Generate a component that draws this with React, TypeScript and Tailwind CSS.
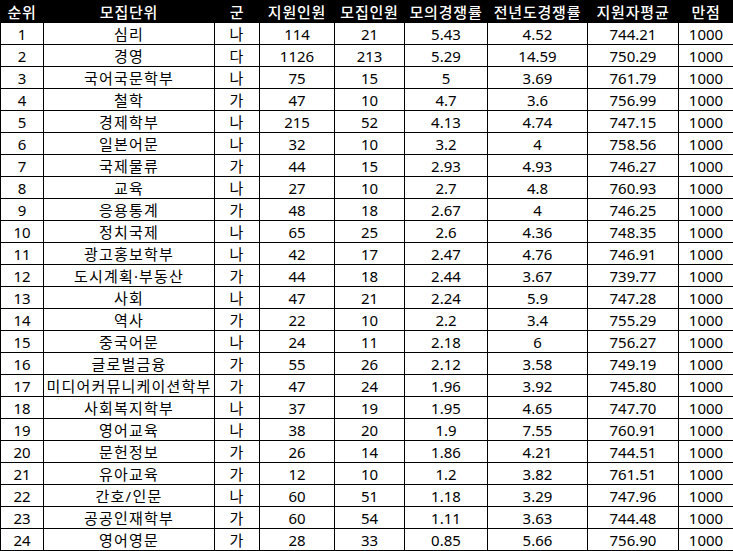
import React from "react";

const rows: (string | number)[][] = [
  [1, "심리", "나", 114, 21, "5.43", "4.52", "744.21", 1000],
  [2, "경영", "다", 1126, 213, "5.29", "14.59", "750.29", 1000],
  [3, "국어국문학부", "나", 75, 15, "5", "3.69", "761.79", 1000],
  [4, "철학", "가", 47, 10, "4.7", "3.6", "756.99", 1000],
  [5, "경제학부", "나", 215, 52, "4.13", "4.74", "747.15", 1000],
  [6, "일본어문", "나", 32, 10, "3.2", "4", "758.56", 1000],
  [7, "국제물류", "가", 44, 15, "2.93", "4.93", "746.27", 1000],
  [8, "교육", "나", 27, 10, "2.7", "4.8", "760.93", 1000],
  [9, "응용통계", "가", 48, 18, "2.67", "4", "746.25", 1000],
  [10, "정치국제", "나", 65, 25, "2.6", "4.36", "748.35", 1000],
  [11, "광고홍보학부", "나", 42, 17, "2.47", "4.76", "746.91", 1000],
  [12, "도시계획·부동산", "가", 44, 18, "2.44", "3.67", "739.77", 1000],
  [13, "사회", "나", 47, 21, "2.24", "5.9", "747.28", 1000],
  [14, "역사", "가", 22, 10, "2.2", "3.4", "755.29", 1000],
  [15, "중국어문", "나", 24, 11, "2.18", "6", "756.27", 1000],
  [16, "글로벌금융", "가", 55, 26, "2.12", "3.58", "749.19", 1000],
  [17, "미디어커뮤니케이션학부", "가", 47, 24, "1.96", "3.92", "745.80", 1000],
  [18, "사회복지학부", "나", 37, 19, "1.95", "4.65", "747.70", 1000],
  [19, "영어교육", "나", 38, 20, "1.9", "7.55", "760.91", 1000],
  [20, "문헌정보", "가", 26, 14, "1.86", "4.21", "744.51", 1000],
  [21, "유아교육", "가", 12, 10, "1.2", "3.82", "761.51", 1000],
  [22, "간호/인문", "나", 60, 51, "1.18", "3.29", "747.96", 1000],
  [23, "공공인재학부", "가", 60, 54, "1.11", "3.63", "744.48", 1000],
  [24, "영어영문", "가", 28, 33, "0.85", "5.66", "756.90", 1000],
];

const headers = ["순위", "모집단위", "군", "지원인원", "모집인원", "모의경쟁률", "전년도경쟁률", "지원자평균", "만점"];
const widths = [43, 171, 45, 75, 70, 83, 100, 91, 55];

export default function App() {
  return (
    <div
      className="w-[733px] h-[551px] bg-white overflow-hidden"
      style={{ fontFamily: '"Noto Sans", "Noto Sans CJK KR", sans-serif' }}
    >
      <table className="w-[733px] table-fixed border-collapse text-[15px] text-black">
        <colgroup>
          {widths.map((w, i) => (
            <col key={i} style={{ width: w }} />
          ))}
        </colgroup>
        <thead>
          <tr className="h-[22px]">
            {headers.map((h) => (
              <th
                key={h}
                className="border border-black bg-black text-white font-medium p-0 leading-[20px] text-center whitespace-nowrap tracking-[0.8px]"
              >
                {h}
              </th>
            ))}
          </tr>
        </thead>
        <tbody>
          {rows.map((r, i) => (
            <tr key={i} className="h-[22px]">
              {r.map((c, j) => (
                <td
                  key={j}
                  className={
                    j === 1 || j === 2
                      ? "border border-black p-0 leading-[20px] text-center whitespace-nowrap overflow-hidden tracking-[1.2px]"
                      : "border border-black p-0 leading-[20px] text-center whitespace-nowrap overflow-hidden"
                  }
                >
                  {c}
                </td>
              ))}
            </tr>
          ))}
        </tbody>
      </table>
    </div>
  );
}
